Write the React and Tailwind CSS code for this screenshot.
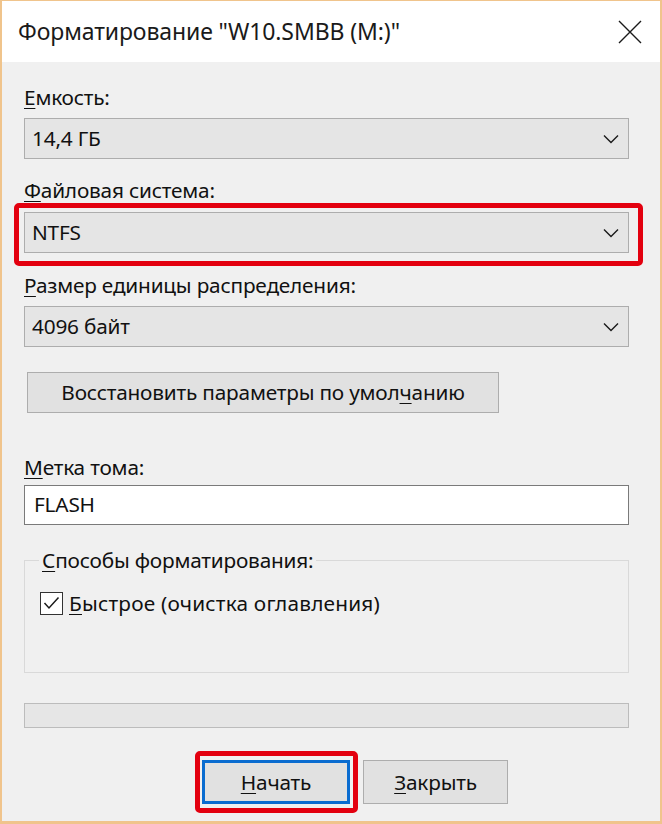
import React from 'react';

const font = { fontFamily: '"Noto Sans", "Open Sans", sans-serif' };

function Chevron() {
  return (
    <svg width="16" height="10" viewBox="0 0 16 10" className="shrink-0">
      <path d="M1 1.5 L8 8.5 L15 1.5" fill="none" stroke="#1a1a1a" strokeWidth="1.4" />
    </svg>
  );
}

function Combo({ value }) {
  return (
    <div className="flex h-[41px] w-[605px] items-center justify-between border border-[#adadad] bg-[#e5e5e5] pl-[7px] pr-[9px]">
      <span>{value}</span>
      <Chevron />
    </div>
  );
}

function Label({ first, rest, className = '' }) {
  return (
    <div className={`h-[24px] leading-[24px] ${className}`}>
      <span className="underline decoration-1 underline-offset-[3px]">{first}</span>
      {rest}
    </div>
  );
}

export default function App() {
  return (
    <div className="h-[824px] w-[662px] border-x-[2px] border-b-[3px] border-t border-[#f0c48c] bg-[#f0f0f0] text-[20.8px] tracking-[-0.2px] text-[#111]" style={font}>
      <div className="flex h-[61px] items-center justify-between bg-white pl-[16px] pr-[18px]">
        <span className="text-[23px] tracking-[-0.1px] text-[#1a1a1a]">Форматирование "W10.SMBB (M:)"</span>
        <svg width="24" height="24" viewBox="0 0 24 24">
          <path d="M1 1 L23 23 M23 1 L1 23" stroke="#1a1a1a" strokeWidth="1.4" />
        </svg>
      </div>

      <div className="flex flex-col pl-[22px] pt-[23px]">
        <Label first="Е" rest="мкость:" />
        <div className="mt-[9px]">
          <Combo value="14,4 ГБ" />
        </div>

        <Label first="Ф" rest="айловая система:" className="mt-[19px]" />
        <div className="relative mt-[10px]">
          <div className="absolute -left-[10px] -top-[9px] h-[63px] w-[629px] rounded-[5px] border-[5px] border-[#e3000f]" />
          <Combo value="NTFS" />
        </div>

        <Label first="Р" rest="азмер единицы распределения:" className="mt-[20px]" />
        <div className="mt-[9px]">
          <Combo value="4096 байт" />
        </div>

        <div className="mt-[25px] ml-[3px] flex h-[41px] w-[472px] items-center justify-center border border-[#adadad] bg-[#e1e1e1]">
          <span>
            Восстановить параметры по умол<span className="underline decoration-1 underline-offset-[3px]">ч</span>анию
          </span>
        </div>

        <Label first="М" rest="етка тома:" className="mt-[42px]" />
        <div className="mt-[6px] flex h-[40px] w-[605px] items-center border border-[#7a7a7a] bg-white pl-[9px]">
          FLASH
        </div>

        <div className="relative mt-[35px] h-[113px] w-[605px] border border-[#d9d9d9]">
          <div className="absolute -top-[13px] left-[14px] bg-[#f0f0f0] px-[3px]">
            <Label first="С" rest="пособы форматирования:" />
          </div>
          <div className="ml-[15px] mt-[30px] flex items-center gap-[6px]">
            <div className="flex h-[23px] w-[23px] items-center justify-center border border-[#333] bg-white">
              <svg width="17" height="14" viewBox="0 0 17 14">
                <path d="M1.5 7 L6 12 L15.5 1.5" fill="none" stroke="#1a1a1a" strokeWidth="1.5" />
              </svg>
            </div>
            <Label first="Б" rest="ыстрое (очистка оглавления)" className="tracking-[0.2px]" />
          </div>
        </div>

        <div className="mt-[30px] h-[25px] w-[605px] border border-[#bcbcbc] bg-[#e6e6e6]" />

        <div className="mt-[32px] flex gap-[13px] pl-[178px]">
          <div className="relative">
            <div className="absolute -left-[7px] -top-[9px] h-[62px] w-[163px] rounded-[5px] border-[5px] border-[#e3000f]" />
            <div className="flex h-[44px] w-[148px] items-center justify-center border-[3px] border-[#0a6cd0] bg-[#e1e1e1]">
              <Label first="Н" rest="ачать" />
            </div>
          </div>
          <div className="flex h-[44px] w-[145px] items-center justify-center border border-[#adadad] bg-[#e1e1e1]">
            <Label first="З" rest="акрыть" />
          </div>
        </div>
      </div>
    </div>
  );
}
